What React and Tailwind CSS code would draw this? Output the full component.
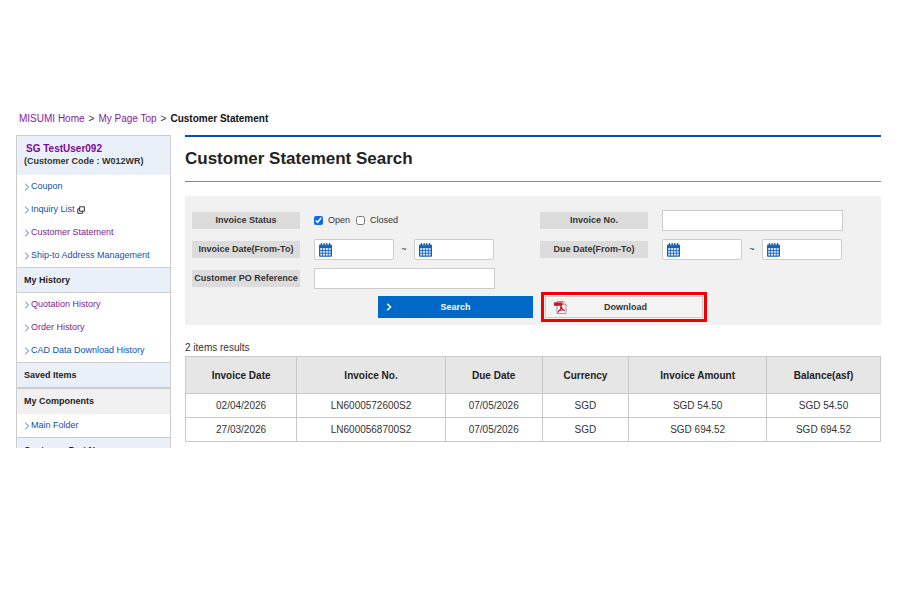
import React, { useState } from "react";

const sections = [
    {
        title: null,
        links: [
            { label: "Coupon" },
            { label: "Inquiry List", newWindow: true },
            { label: "Customer Statement", visited: true },
            { label: "Ship-to Address Management" },
        ],
    },
    {
        title: "My History",
        links: [
            { label: "Quotation History", visited: true },
            { label: "Order History", visited: true },
            { label: "CAD Data Download History" },
        ],
    },
    { title: "Saved Items", links: [] },
    { title: "My Components", plain: true, links: [{ label: "Main Folder" }] },
    { title: "Customer Part No.", links: [] },
];

const columns = [
    { header: "Invoice Date", accessor: "invoiceDate", width: "w-[16%]" },
    { header: "Invoice No.", accessor: "invoiceNo", width: "w-[21.4%]" },
    { header: "Due Date", accessor: "dueDate", width: "w-[13.9%]" },
    { header: "Currency", accessor: "currency", width: "w-[12.5%]" },
    { header: "Invoice Amount", accessor: "amount", width: "w-[19.8%]" },
    { header: "Balance(asf)", accessor: "balance", width: "w-[16.4%]" },
];

const invoices = [
    { invoiceDate: "02/04/2026", invoiceNo: "LN6000572600S2", dueDate: "07/05/2026", currency: "SGD", amount: "SGD 54.50", balance: "SGD 54.50" },
    { invoiceDate: "27/03/2026", invoiceNo: "LN6000568700S2", dueDate: "07/05/2026", currency: "SGD", amount: "SGD 694.52", balance: "SGD 694.52" },
];

const Chevron = ({ className }) => (
    <svg viewBox="0 0 6 8" className={className} fill="none" stroke="currentColor" aria-hidden="true">
        <path d="M1.2 .8 4.6 4 1.2 7.2" />
    </svg>
);

const NewWindowIcon = () => (
    <svg viewBox="0 0 8 8" className="ml-0.5 size-2 text-[#333]" fill="none" stroke="currentColor" aria-hidden="true">
        <path d="M2.6 .8h4.8v4.4H2.6z" />
        <path d="M2.5 2.8H.8v4.5h4.7V5.2" />
    </svg>
);

const CalendarIcon = () => (
    <svg viewBox="0 0 13 14" className="h-3.5 w-[13px] shrink-0" aria-hidden="true">
        <rect x="0" y="1.5" width="13" height="12.2" rx="1" fill="#1560b8" />
        <path d="M2.5 0v3M5.2 0v3M7.8 0v3M10.5 0v3" stroke="#1560b8" strokeWidth="1.2" />
        <path d="M3.8 1.2v1.6M6.5 1.2v1.6M9.2 1.2v1.6" stroke="#8db6e4" strokeWidth=".6" />
        <g fill="#cfe2f7">
            {[5, 7.8, 10.6].map((y) =>
                [1.2, 4, 6.8, 9.6].map((x) => <rect key={`${x}-${y}`} x={x} y={y} width="2.1" height="2" />)
            )}
        </g>
    </svg>
);

const PdfIcon = () => (
    <svg viewBox="0 0 13 13" className="size-[13px] shrink-0" aria-hidden="true">
        <path d="M3 .5h6.2L12 3.3v9.2H3z" fill="#fff" stroke="#9a8585" strokeWidth=".9" />
        <path d="M9 .5v3h3" fill="#ddd" stroke="#9a8585" strokeWidth=".7" />
        <path d="M0 1.4h8.4v3.4H0z" fill="#c01722" />
        <path d="M7 4.6c.2 2.4-1 4.8-3.2 6.9M7 5.5c.5 2 1.8 3.5 4 4M4.6 9.9c1.8-1 4-1.2 6.4-.6" fill="none" stroke="#c01722" strokeWidth="1.1" />
    </svg>
);

const FieldRow = ({ label, htmlFor, children }) => (
    <div className="flex h-[21px] items-center gap-3.5 pl-[7px]">
        <label htmlFor={htmlFor} className="w-[108px] shrink-0 bg-[#dcdcdc] text-center text-[9px] leading-[17px] font-bold text-[#333]">
            {label}
        </label>
        {children}
    </div>
);

const DateInput = ({ id, label }) => (
    <div className="flex h-[21px] w-20 items-center rounded-xs border border-[#ccc] bg-white pl-1">
        <CalendarIcon />
        <input id={id} aria-label={label} type="text" className="w-full min-w-0 px-1 text-[9px] outline-none" />
    </div>
);

const DateRange = ({ id, label }) => (
    <div className="flex items-center text-[9px] text-[#333]">
        <DateInput id={id} label={`${label} from`} />
        <span className="w-5 text-center">~</span>
        <DateInput label={`${label} to`} />
    </div>
);

const Sidebar = () => (
    <aside className="h-[313px] w-[155px] shrink-0 overflow-hidden border-x border-t border-[#ccc] text-[9px]">
        <div className="h-[39px] bg-[#eaf0fa] pt-[7px] pl-[7px] leading-3 font-bold">
            <a href="#" className="block pl-0.5 text-[10px] text-[#7b0a94]">SG TestUser092</a>
            <p className="text-[#333]">(Customer Code : W012WR)</p>
        </div>
        {sections.map((section, i) => (
            <section key={i}>
                {section.title && (
                    <h2 className={`h-[26px] border-t border-[#ccc] pl-[7px] leading-[25px] font-bold text-[#222] ${section.plain ? "bg-[#f1f1f1]" : "border-b bg-[#eaf0fa]"}`}>
                        {section.title}
                    </h2>
                )}
                <ul>
                    {section.links.map((link) => (
                        <li key={link.label} className="flex h-[23px] items-center pl-[7px]">
                            <Chevron className="mr-px h-2 w-1.5 text-[#3f78c8]" />
                            <a href="#" className={link.visited ? "text-[#7b1a94]" : "text-[#0f51b0]"}>{link.label}</a>
                            {link.newWindow && <NewWindowIcon />}
                        </li>
                    ))}
                </ul>
            </section>
        ))}
    </aside>
);

const SearchForm = () => {
    const [open, setOpen] = useState(true);
    const [closed, setClosed] = useState(false);

    return (
        <form className="mt-3.5 bg-[#f1f1f1] pt-3.5 pb-[3px]" onSubmit={(e) => e.preventDefault()}>
            <div className="grid grid-cols-2 gap-y-2">
                <FieldRow label="Invoice Status" htmlFor="status-open">
                    <div className="flex items-center text-[9px] text-[#333]">
                        <input id="status-open" type="checkbox" checked={open} onChange={(e) => setOpen(e.target.checked)} className="size-[9px] accent-[#0b6bf0]" />
                        <label htmlFor="status-open" className="mr-1.5 ml-[5px]">Open</label>
                        <input id="status-closed" type="checkbox" checked={closed} onChange={(e) => setClosed(e.target.checked)} className="size-[9px]" />
                        <label htmlFor="status-closed" className="ml-[5px]">Closed</label>
                    </div>
                </FieldRow>
                <FieldRow label="Invoice No." htmlFor="invoice-no">
                    <input id="invoice-no" type="text" className="h-[21px] w-[181px] border border-[#ccc] bg-white px-1 text-[9px]" />
                </FieldRow>
                <FieldRow label="Invoice Date(From-To)" htmlFor="invoice-date">
                    <DateRange id="invoice-date" label="Invoice date" />
                </FieldRow>
                <FieldRow label="Due Date(From-To)" htmlFor="due-date">
                    <DateRange id="due-date" label="Due date" />
                </FieldRow>
                <FieldRow label="Customer PO Reference" htmlFor="po-reference">
                    <input id="po-reference" type="text" className="h-[21px] w-[181px] border border-[#ccc] bg-white px-1 text-[9px]" />
                </FieldRow>
            </div>
            <div className="mt-[3px] grid grid-cols-2 items-center text-[9px] font-bold">
                <button type="submit" className="flex h-[22px] w-[155px] items-center justify-self-end bg-[#0068c6] px-2 text-white">
                    <Chevron className="h-2 w-1.5 stroke-[1.5]" />
                    <span className="flex-1 pt-px pr-1.5">Search</span>
                </button>
                <div className="ml-2 w-[166px] border-[3px] border-[#f00000] p-px">
                    <button type="button" className="flex h-[22px] w-full items-center border border-[#ccc] bg-[#f3f3f3] px-2 text-[#333]">
                        <PdfIcon />
                        <span className="flex-1 pt-px pr-2.5">Download</span>
                    </button>
                </div>
            </div>
        </form>
    );
};

const ResultTable = () => (
    <table className="mt-px w-full table-fixed border-collapse text-center text-[10px] text-[#333]">
        <thead>
            <tr className="h-[37px] bg-[#e6e6e6] text-[#222]">
                {columns.map((col) => (
                    <th key={col.accessor} className={`border border-[#c8c8c8] ${col.width}`}>{col.header}</th>
                ))}
            </tr>
        </thead>
        <tbody>
            {invoices.map((row) => (
                <tr key={row.invoiceNo} className="h-6">
                    {columns.map((col) => (
                        <td key={col.accessor} className="border border-[#c8c8c8]">{row[col.accessor]}</td>
                    ))}
                </tr>
            ))}
        </tbody>
    </table>
);

const CustomerStatementPage = () => (
    <div className="min-h-screen bg-white pt-[111px] pr-[23px] pl-4 font-['Liberation_Sans',Arial,sans-serif] leading-normal">
        <nav className="flex gap-1 pl-[3px] text-[10px] leading-4 text-[#333]">
            <a href="#" className="text-[#8a1a9e]">MISUMI Home</a>
            <span>&gt;</span>
            <a href="#" className="text-[#8a1a9e]">My Page Top</a>
            <span>&gt;</span>
            <span className="font-bold text-[#111]">Customer Statement</span>
        </nav>
        <div className="mt-2 flex gap-3.5">
            <Sidebar />
            <main className="min-w-0 flex-1">
                <h1 className="border-t-2 border-b border-t-[#0a4bb5] border-b-[#888] text-[17px] leading-[44px] font-bold text-[#222]">
                    Customer Statement Search
                </h1>
                <SearchForm />
                <p className="mt-[15px] text-[10px] leading-[15px] text-[#333]">2 items results</p>
                <ResultTable />
            </main>
        </div>
    </div>
);

export default CustomerStatementPage;
